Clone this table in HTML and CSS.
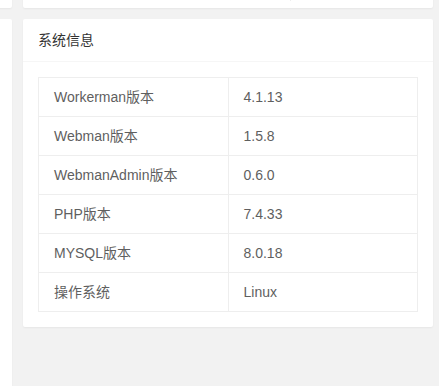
FILE: index.html
```html
<!DOCTYPE html>
<html lang="zh-CN">
  <head>
    <meta charset="UTF-8" />
    <meta name="viewport" content="width=device-width, initial-scale=1.0" />
    <title>系统信息</title>
    <link rel="stylesheet" href="styles.css">
  </head>

  <body>
    <div class="console">
      <div class="side">
        <div class="card side-top"></div>
        <div class="card side-main"></div>
      </div>

      <div class="main">
        <div class="card top-card">
          <div class="top-table">
            <div class="top-cell"></div>
            <div class="top-cell"></div>
          </div>
        </div>

        <div class="card">
          <div class="card-header">系统信息</div>
          <div class="card-body">
            <table class="info-table">
              <tbody>
                <tr><td>Workerman版本</td><td>4.1.13</td></tr>
                <tr><td>Webman版本</td><td>1.5.8</td></tr>
                <tr><td>WebmanAdmin版本</td><td>0.6.0</td></tr>
                <tr><td>PHP版本</td><td>7.4.33</td></tr>
                <tr><td>MYSQL版本</td><td>8.0.18</td></tr>
                <tr><td>操作系统</td><td>Linux</td></tr>
              </tbody>
            </table>
          </div>
        </div>
      </div>
    </div>
  </body>
</html>
```

FILE: styles.css
```css
body {
  margin: 0;
  background-color: #f2f2f2;
  font-family: "Liberation Sans", "Noto Sans CJK SC", sans-serif;
  font-size: 14px;
  color: #333;
  height: 100vh;
  overflow: hidden;
}

.console {
  display: grid;
  grid-template-columns: 112px 410px;
  column-gap: 11px;
  margin-left: -100px;
  margin-top: -60px;
}

.side,
.main {
  display: flex;
  flex-direction: column;
  gap: 11px;
}

.card {
  background-color: #fff;
  border-radius: 2px;
  box-shadow: 0 1px 2px 0 rgba(0, 0, 0, 0.05);
}

.side-top {
  height: 68px;
}

.side-main {
  height: 367px;
  border-radius: 2px 2px 0 0;
}

.top-card {
  height: 68px;
  padding: 0 15px;
  box-sizing: border-box;
}

.top-table {
  display: grid;
  grid-template-columns: 253px 1fr;
  height: 61px;
}

.top-cell:first-child {
  border-right: 1px solid #eee;
}

.card-header {
  height: 42px;
  line-height: 42px;
  padding: 0 15px;
  border-bottom: 1px solid #f6f6f6;
  color: #333;
}

.card-body {
  padding: 15px;
}

.info-table {
  width: 100%;
  border-collapse: collapse;
  table-layout: fixed;
  color: #5f5f5f;
}

.info-table td {
  border: 1px solid #eee;
  padding: 9px 15px;
  line-height: 20px;
}
```
